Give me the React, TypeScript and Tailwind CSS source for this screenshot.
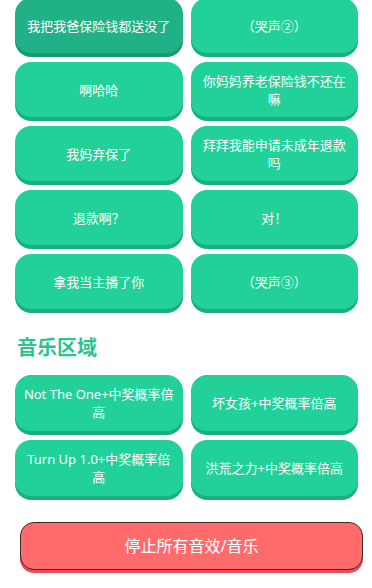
import React from "react";

const top = [
  "我把我爸保险钱都送没了",
  "（哭声②）",
  "啊哈哈",
  "你妈妈养老保险钱不还在嘛",
  "我妈弃保了",
  "拜拜我能申请未成年退款吗",
  "退款啊？",
  "对！",
  "拿我当主播了你",
  "（哭声③）",
];

const music = [
  "Not The One+中奖概率倍高",
  "坏女孩+中奖概率倍高",
  "Turn Up 1.0+中奖概率倍高",
  "洪荒之力+中奖概率倍高",
];

export default function App() {
  return (
    <div
      className="w-[372px] h-[588px] overflow-hidden bg-white"
      style={{ fontFamily: '"Noto Sans", "Noto Sans CJK SC", sans-serif' }}
    >
      <div className="grid grid-cols-2 gap-x-2 gap-y-[9px] pl-[15px] pr-[14px] mt-[-2px]">
        {top.map((t, i) => (
          <button
            key={i}
            className={
              i === 0
                ? "h-[55px] rounded-[16px] bg-[#20b286] shadow-[0_4px_0_#1a9a70] px-[10px] text-white text-[13px] leading-[18px] flex items-center justify-center text-center"
                : "h-[55px] rounded-[16px] bg-[#22d199] shadow-[0_4px_0_#1dae80] px-[10px] text-white text-[13px] leading-[18px] flex items-center justify-center text-center"
            }
          >
            {t}
          </button>
        ))}
      </div>
      <h2 className="mt-[25px] ml-[17px] text-[20px] leading-[28px] font-bold text-[#2bc48f]">
        音乐区域
      </h2>
      <div className="grid grid-cols-2 gap-x-2 gap-y-[9px] pl-[15px] pr-[14px] mt-[13px]">
        {music.map((t, i) => (
          <button
            key={i}
            className="h-[56px] rounded-[16px] bg-[#22d199] shadow-[0_4px_0_#1dae80] px-[6px] text-white text-[13px] leading-[18px] flex items-center justify-center text-center"
          >
            {t}
          </button>
        ))}
      </div>
      <div className="pl-[20px] mt-[26px]">
        <button className="w-[343px] h-[48px] rounded-[14px] bg-[#ff6b6b] border border-[#3a2a2a] shadow-[0_3px_0_#ea4d5c] text-white text-[16px] flex items-center justify-center">
          停止所有音效/音乐
        </button>
      </div>
    </div>
  );
}
